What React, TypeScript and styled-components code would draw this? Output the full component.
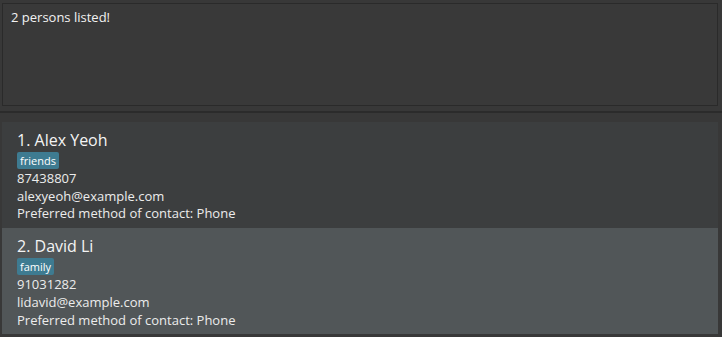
import React from "react";
import styled, { createGlobalStyle } from "styled-components";

const GlobalStyle = createGlobalStyle`
  html, body {
    margin: 0;
    padding: 0;
    background: #383838;
  }
  body {
    font-family: "Open Sans", "Noto Sans", sans-serif;
  }
`;

const Window = styled.div`
  width: 722px;
  height: 337px;
  background: #383838;
  display: flex;
  flex-direction: column;
  overflow: hidden;
`;

const ResultPane = styled.div`
  height: 108px;
  padding: 3px 4px 0 2px;
  box-sizing: border-box;
  display: flex;
`;

const ResultBox = styled.div`
  flex: 1;
  height: 103px;
  box-sizing: border-box;
  border: 1px solid #2a2a2a;
  background: #393939;
  padding: 5px 8px;
  color: #f2f2f2;
  font-size: 13px;
  line-height: 17.7px;
`;

const ListPane = styled.div`
  flex: 1;
  margin-top: 3px;
  border-top: 2px solid #2b2b2b;
  padding: 9px 4px 0 2px;
  display: flex;
  flex-direction: column;
`;

const Card = styled.div<{ $odd: boolean }>`
  background: ${(p) => (p.$odd ? "#515658" : "#3c3e3f")};
  padding: 7px 5px 5px 15px;
  display: flex;
  flex-direction: column;
  align-items: flex-start;
  color: #f0f0f0;
`;

const Name = styled.div`
  font-size: 16px;
  line-height: 22px;
  color: #f4f4f4;
`;

const Tags = styled.div`
  display: flex;
  gap: 5px;
  margin: 1px 0 1px;
`;

const Tag = styled.span`
  background: #3e7b91;
  color: #ffffff;
  font-size: 11px;
  line-height: 15px;
  padding: 1px 3px;
  border-radius: 2px;
`;

const Detail = styled.div`
  font-size: 13px;
  line-height: 17.7px;
  color: #ececec;
`;

const persons = [
  {
    name: "Alex Yeoh",
    tags: ["friends"],
    phone: "87438807",
    email: "alexyeoh@example.com",
    contact: "Phone",
  },
  {
    name: "David Li",
    tags: ["family"],
    phone: "91031282",
    email: "lidavid@example.com",
    contact: "Phone",
  },
];

export default function App() {
  return (
    <>
      <GlobalStyle />
      <Window>
        <ResultPane>
          <ResultBox>2 persons listed!</ResultBox>
        </ResultPane>
        <ListPane>
          {persons.map((p, i) => (
            <Card key={p.name} $odd={i % 2 === 1}>
              <Name>
                {i + 1}. {p.name}
              </Name>
              <Tags>
                {p.tags.map((t) => (
                  <Tag key={t}>{t}</Tag>
                ))}
              </Tags>
              <Detail>{p.phone}</Detail>
              <Detail>{p.email}</Detail>
              <Detail>Preferred method of contact: {p.contact}</Detail>
            </Card>
          ))}
        </ListPane>
      </Window>
    </>
  );
}
